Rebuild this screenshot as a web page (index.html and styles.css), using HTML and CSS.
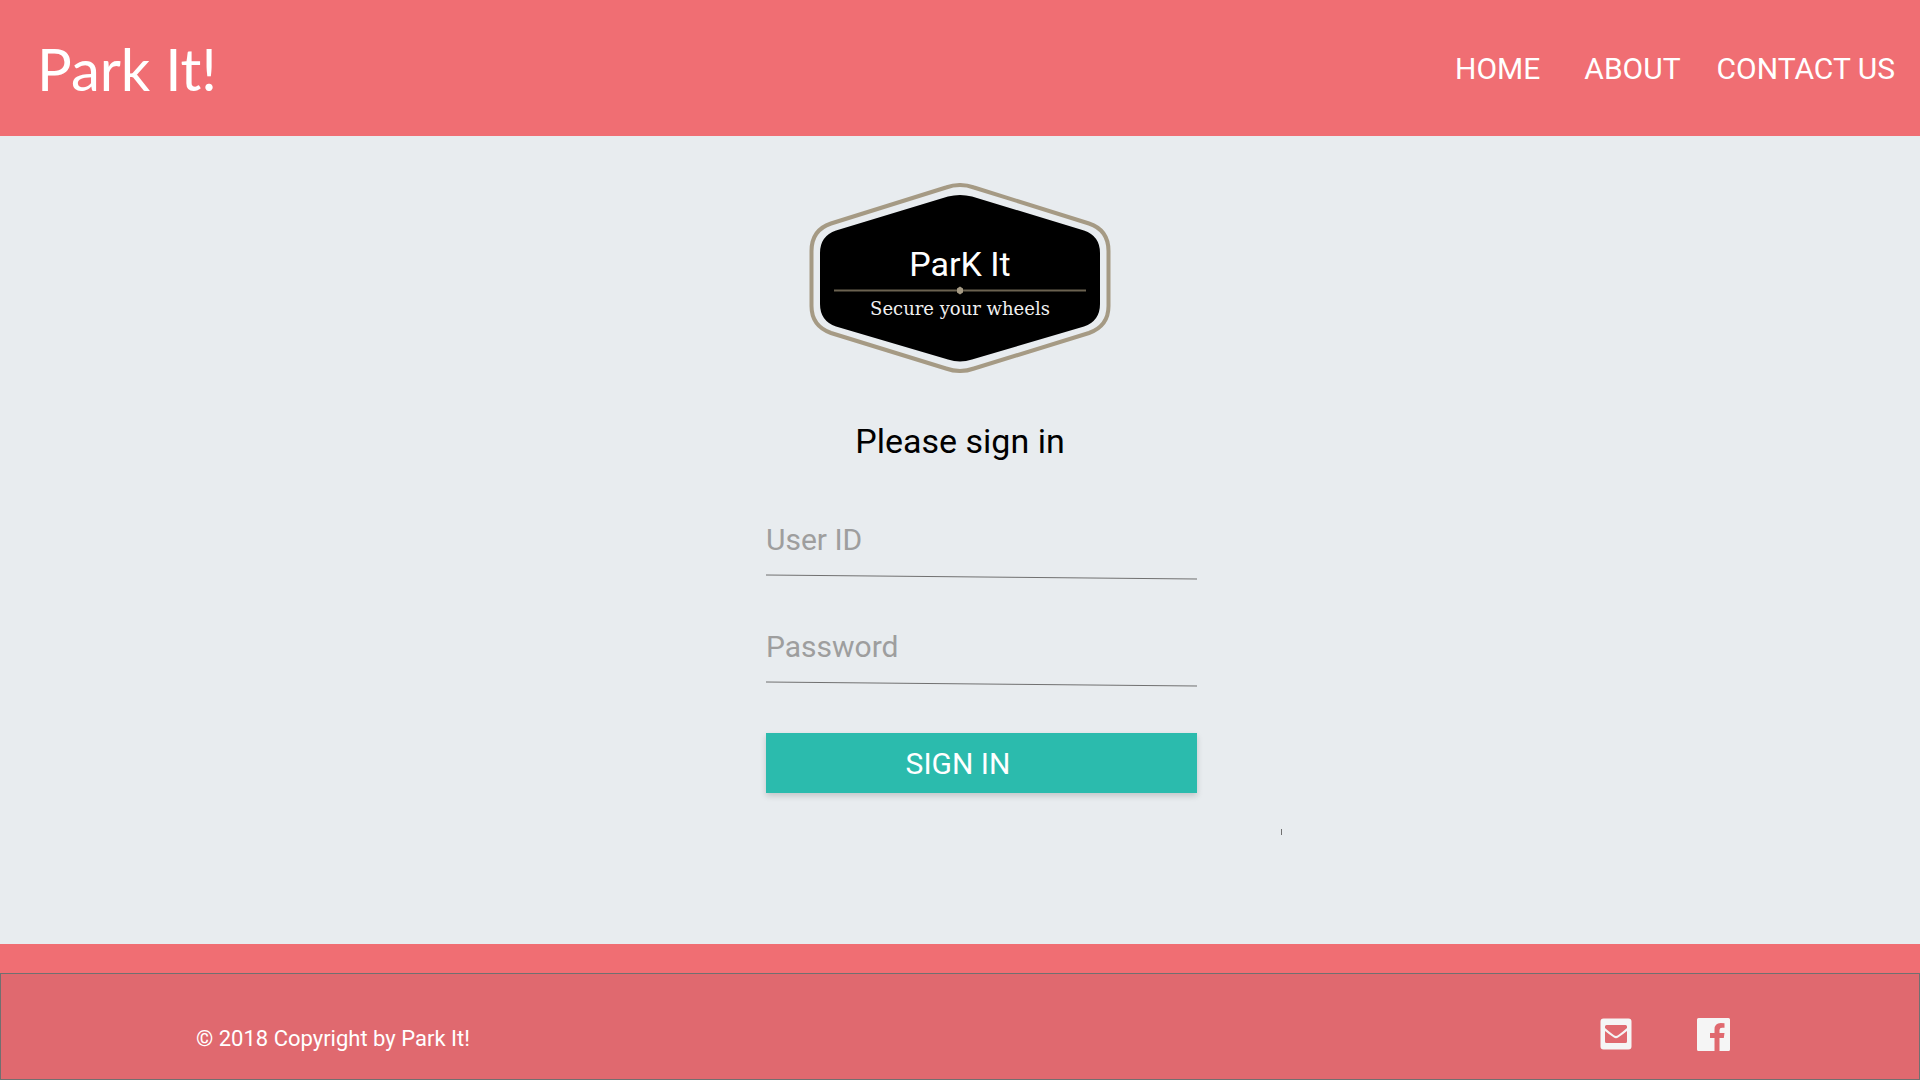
FILE: index.html
```html
<!DOCTYPE html>
<html lang="en">
<head>
<meta charset="utf-8">
<meta name="viewport" content="width=device-width, initial-scale=1">
<title>Park It!</title>
<link rel="stylesheet" href="styles.css">
</head>
<body>
<header class="header">
  <a class="brand" href="#">Park It!</a>
  <nav class="nav">
    <a class="nav-home" href="#">HOME</a>
    <a href="#">ABOUT</a>
    <a href="#">CONTACT US</a>
  </nav>
</header>
<main class="main">
  <svg class="logo" viewBox="0 0 302 190" role="img" aria-label="Park It, secure your wheels">
    <path d="M137 4.500Q151 -0.500 165 4.500L280 40.500Q299.500 47 299.500 68V123Q299.500 143 280 150L165 185.500Q151 190.500 137 185.500L22 150Q2.500 143 2.500 123V68Q2.500 47 22 40.500Z" fill="none" stroke="#a59a84" stroke-width="4"/>
    <path d="M139 13.500Q151 10.500 163 13.500L275 47.500Q291 53 291 70V121Q291 138 275 143.500L163 176.500Q151 180.500 139 176.500L27 143.500Q11 138 11 121V70Q11 53 27 47.500Z" fill="#000"/>
    <text class="logo-name" x="151" y="93" text-anchor="middle">ParK It</text>
    <path d="M25 107.500H277" stroke="#6b6250" stroke-width="2"/>
    <path d="M151 103.500l3 2v4l-3 2-3-2v-4z" fill="#a59a84"/>
    <text class="logo-tagline" x="151" y="132" text-anchor="middle">Secure your wheels</text>
  </svg>
  <h1 class="title">Please sign in</h1>
  <form class="form">
    <div class="field">
      <input type="text" placeholder="User ID" aria-label="User ID">
      <svg class="rule" viewBox="0 0 431 6" preserveAspectRatio="none" aria-hidden="true"><path d="M0 1L431 5"/></svg>
    </div>
    <div class="field">
      <input type="password" placeholder="Password" aria-label="Password">
      <svg class="rule" viewBox="0 0 431 6" preserveAspectRatio="none" aria-hidden="true"><path d="M0 1L431 5"/></svg>
    </div>
    <button class="submit" type="button">SIGN IN</button>
    <span class="tick"></span>
  </form>
</main>
<footer class="footer">
  <div class="footer-bar">
    <p class="copyright">© 2018 Copyright by Park It!</p>
    <div class="social">
      <a href="#" aria-label="Email">
        <svg width="32" height="32" viewBox="0 0 32 32"><path fill="#f5f5f5" fill-rule="evenodd" d="M3.500 0.500h25a3 3 0 0 1 3 3v25a3 3 0 0 1-3 3h-25a3 3 0 0 1-3-3v-25a3 3 0 0 1 3-3zM6.500 7a1.500 1.500 0 0 0-1.500 1.500v1.500q4.500 4 9 7.200 2 1.400 4 0 4.500-3.200 9-7.200v-1.500a1.500 1.500 0 0 0-1.500-1.500zM5 13v10.500a1.500 1.500 0 0 0 1.500 1.500h19a1.500 1.500 0 0 0 1.500-1.500V13q-4 3.300-8.500 6.300-2.500 1.800-5 0Q9 16.300 5 13z"/></svg>
      </a>
      <a href="#" aria-label="Facebook">
        <svg width="33" height="33" viewBox="0 0 33 33"><path fill="#f5f5f5" d="M1.500 0h30Q33 0 33 1.500v30Q33 33 31.500 33H22.500V20h4.300l.7-5h-5v-3q0-2.300 2.500-2.300h2.500V5.300q-1.500-.3-3.700-.3-6.300 0-6.300 6.500V15h-4.500v5h4.500v13h-16Q0 33 0 31.500v-30Q0 0 1.500 0z"/></svg>
      </a>
    </div>
  </div>
</footer>
</body>
</html>
```
FILE: styles.css
```css
* {
  box-sizing: border-box;
}

body {
  display: flex;
  flex-direction: column;
  min-height: 100vh;
  margin: 0;
  background: #e8ecef;
  color: #000;
  font-family: Roboto, sans-serif;
  font-size: 30px;
}

a {
  color: inherit;
  text-decoration: none;
}

.header {
  display: flex;
  align-items: center;
  justify-content: space-between;
  min-height: 136px;
  padding: 1px 25px 0 37px;
  background: #f06e73;
  color: #fff;
}

.brand {
  font-family: Lato, "Open Sans", sans-serif;
  font-size: 58px;
  line-height: 80px;
}

.nav {
  display: flex;
  gap: 36px;
  line-height: 40px;
}

.nav-home {
  margin-right: 8px;
}

.main {
  display: flex;
  flex: 1;
  flex-direction: column;
  align-items: center;
  padding: 47px 24px 0;
}

.logo {
  width: 302px;
  height: 190px;
}

.logo-name {
  fill: #fff;
  font-family: Roboto, sans-serif;
  font-size: 34px;
}

.logo-tagline {
  fill: #f0f0f0;
  font-family: "DejaVu Serif", serif;
  font-size: 18px;
}

.title {
  margin: 48px 0 0;
  font-size: 34px;
  font-weight: 400;
  line-height: 40px;
}

.form {
  position: relative;
  display: flex;
  flex-direction: column;
  gap: 46px;
  width: 431px;
  max-width: 100%;
  margin: 58px 0 0 43px;
}

.field {
  display: flex;
  flex-direction: column;
  gap: 15px;
}

.field input {
  width: 100%;
  height: 40px;
  padding: 0;
  border: 0;
  outline: 0;
  background: transparent;
  color: #000;
  font: inherit;
}

.field input::placeholder {
  color: #9e9e9e;
  opacity: 1;
}

.rule {
  width: 100%;
  height: 6px;
}

.rule path {
  stroke: #707070;
}

.submit {
  height: 60px;
  padding: 0 47px 0 0;
  border: 0;
  background: #2bbbad;
  box-shadow: 0 3px 6px rgba(0, 0, 0, 0.16);
  color: #fff;
  font: inherit;
}

.tick {
  position: absolute;
  right: -85px;
  bottom: -42px;
  width: 1px;
  height: 6px;
  background: #707070;
}

.footer {
  padding-top: 29px;
  background: #f06e73;
}

.footer-bar {
  display: flex;
  align-items: center;
  justify-content: space-between;
  min-height: 107px;
  padding: 15px 189px 0 195px;
  border: 1px solid #707070;
  background: #e0696f;
  color: #fff;
}

.copyright {
  margin: 10px 0 0;
  font-size: 22px;
  line-height: 28px;
}

.social {
  display: flex;
  gap: 65px;
}

.social svg {
  display: block;
}
```
